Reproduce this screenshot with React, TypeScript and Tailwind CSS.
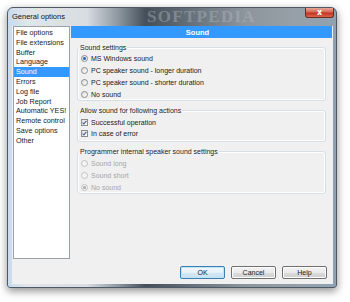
import React from "react";

function Radio({ checked, disabled, label }: { checked?: boolean; disabled?: boolean; label: string }) {
  return (
    <div className="flex items-center h-[12px]">
      <span
        className={`w-[7px] h-[7px] rounded-full border flex items-center justify-center ${
          disabled
            ? "border-[#c2c2c2] bg-[#f4f4f4]"
            : "border-[#8a8c8e] bg-gradient-to-br from-[#dcdcdc] to-[#ffffff]"
        }`}
      >
        {checked && (
          <span className={`w-[3px] h-[3px] rounded-full ${disabled ? "bg-[#a9a9a9]" : "bg-[#2563b0]"}`} />
        )}
      </span>
      <span className={`ml-[3px] ${disabled ? "text-[#a6a6a6]" : "text-[#1a1a1a]"}`}>{label}</span>
    </div>
  );
}

function Check({ label }: { label: string }) {
  return (
    <div className="flex items-center h-[11px]">
      <span className="w-[7px] h-[7px] border border-[#8a8c8e] bg-gradient-to-br from-[#e2e2e2] to-[#ffffff] flex items-center justify-center">
        <svg width="5" height="5" viewBox="0 0 5 5">
          <path d="M0.6 2.6 L1.9 3.9 L4.4 0.8" stroke="#4a5f8c" strokeWidth="1.1" fill="none" />
        </svg>
      </span>
      <span className="ml-[3px] text-[#1a1a1a]">{label}</span>
    </div>
  );
}

const items = [
  "File options",
  "File extensions",
  "Buffer",
  "Language",
  "Sound",
  "Errors",
  "Log file",
  "Job Report",
  "Automatic YES!",
  "Remote control",
  "Save options",
  "Other",
];

export default function App() {
  return (
    <div className="w-[350px] h-[302px] bg-white pt-[7px] pl-[7px] font-['Liberation_Sans',Arial,sans-serif] text-[7px] leading-[9px]">
      <div className="w-[330px] h-[281px] rounded-t-[6px] rounded-b-[3px] border border-[#4d5a66] shadow-[0_3px_9px_rgba(0,0,0,0.45)] flex flex-col bg-[linear-gradient(90deg,#c9dbee_0%,#e1e5e9_6%,#d8dde2_24%,#8a949d_34%,#444f59_42%,#66717b_56%,#8d959c_72%,#97a0a8_88%,#8fa2b2_100%)]">
        {/* title bar */}
        <div className="h-[18px] flex items-start overflow-hidden">
          <span className="ml-[4px] mt-[4px] text-[7.5px] leading-[10px] text-[#111]">General options</span>
          <span className="ml-[82px] mt-[1px] font-['Liberation_Serif',serif] font-bold text-[17px] leading-[16px] tracking-[1.3px] text-[#b4bcc3] opacity-40">
            SOFTPEDIA
          </span>
          <div className="ml-auto mr-[2px] w-[29px] h-[10px] rounded-b-[3px] border border-t-0 border-[#6e2b22] bg-[linear-gradient(180deg,#e8a796_0%,#d46a55_45%,#c0341f_55%,#d9654a_100%)] flex items-center justify-center">
            <span className="text-white font-bold text-[8px] leading-[8px] font-['DejaVu_Sans',sans-serif]">x</span>
          </div>
        </div>
        {/* client area */}
        <div className="ml-[4px] mr-[3px] h-[258px] bg-[#f0f0f0] flex flex-col">
          <div className="h-[233px] flex pl-[1px]">
            <div className="w-[57px] h-full bg-white border border-[#9aa0a8] pt-[1px] text-[7.2px]">
              {items.map((it) => (
                <div
                  key={it}
                  className={`h-[9.8px] leading-[9.8px] pl-[2px] whitespace-nowrap ${
                    it === "Sound" ? "bg-[#3399ff] text-white" : "text-[#1a1a1a]"
                  }`}
                >
                  {it}
                </div>
              ))}
            </div>
            <div className="w-[261px] ml-[1px] flex flex-col">
              <div className="h-[12px] bg-[#3399ff] flex items-center justify-center pr-[8px] text-white font-bold text-[7.5px]">
                Sound
              </div>
              <fieldset className="mx-[6px] mt-[5px] border border-[#d5dfe5] rounded-[3px] shadow-[inset_0_0_0_1px_#ffffff] pl-[3px] pb-0">
                <legend className="ml-[-2px] px-[1px] leading-[9px] text-[#1a1a1a]">Sound settings</legend>
                <Radio checked label="MS Windows sound" />
                <Radio label="PC speaker sound - longer duration" />
                <Radio label="PC speaker sound - shorter duration" />
                <Radio label="No sound" />
              </fieldset>
              <fieldset className="mx-[6px] mt-[5px] border border-[#d5dfe5] rounded-[3px] shadow-[inset_0_0_0_1px_#ffffff] pl-[3px] pt-[2px] pb-[2px]">
                <legend className="ml-[-2px] px-[1px] leading-[9px] text-[#1a1a1a]">Allow sound for following actions</legend>
                <Check label="Successful operation" />
                <Check label="In case of error" />
              </fieldset>
              <fieldset className="mx-[6px] mt-[5px] border border-[#d5dfe5] rounded-[3px] shadow-[inset_0_0_0_1px_#ffffff] pl-[3px] pt-[1px] pb-0">
                <legend className="ml-[-2px] px-[1px] leading-[9px] text-[#1a1a1a]">
                  Programmer internal speaker sound settings
                </legend>
                <Radio disabled label="Sound long" />
                <Radio disabled label="Sound short" />
                <Radio disabled checked label="No sound" />
              </fieldset>
            </div>
          </div>
          <div className="mt-[7px] flex justify-end gap-[6px] pr-[6px]">
            <button className="w-[45px] h-[13px] rounded-[2px] border border-[#3c7fb1] shadow-[inset_0_0_0_1px_#bfe3f7] bg-[linear-gradient(180deg,#f4f9fc_0%,#e5f1f9_50%,#d3e7f4_51%,#c8e1f2_100%)] text-[#1a1a1a] text-[7px] leading-[11px]">
              OK
            </button>
            <button className="w-[45px] h-[13px] rounded-[2px] border border-[#707070] shadow-[inset_0_0_0_1px_#fcfcfc] bg-[linear-gradient(180deg,#f2f2f2_0%,#ebebeb_50%,#dddddd_51%,#cfcfcf_100%)] text-[#1a1a1a] text-[7px] leading-[11px]">
              Cancel
            </button>
            <button className="w-[45px] h-[13px] rounded-[2px] border border-[#707070] shadow-[inset_0_0_0_1px_#fcfcfc] bg-[linear-gradient(180deg,#f2f2f2_0%,#ebebeb_50%,#dddddd_51%,#cfcfcf_100%)] text-[#1a1a1a] text-[7px] leading-[11px]">
              Help
            </button>
          </div>
        </div>
      </div>
    </div>
  );
}
